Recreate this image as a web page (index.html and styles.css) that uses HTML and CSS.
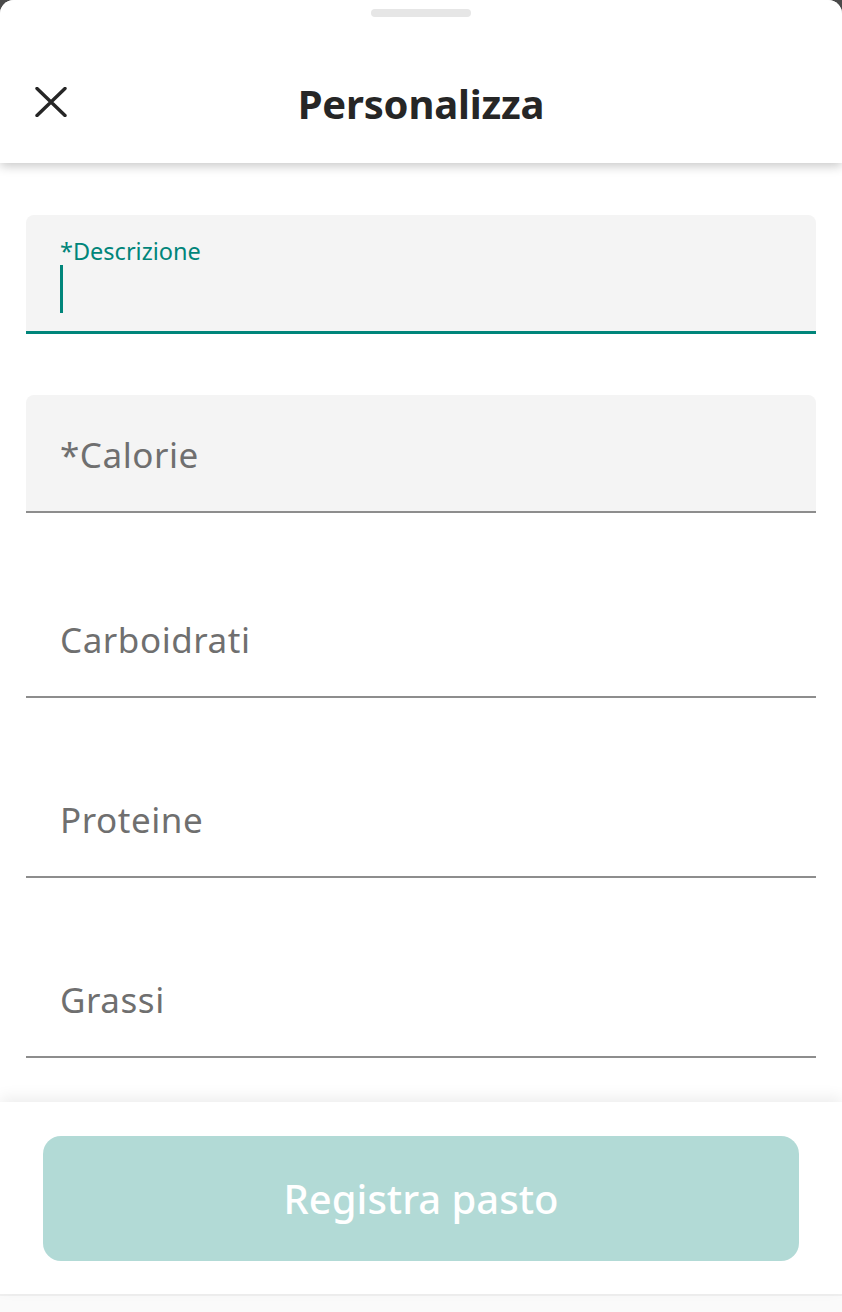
FILE: index.html
```html
<!DOCTYPE html>
<html lang="it">
<head>
<meta charset="utf-8">
<title>Personalizza</title>
<link rel="stylesheet" href="styles.css">
</head>
<body>
<div class="sheet">
  <header class="header">
    <div class="handle"></div>
    <div class="header-row">
      <button class="close" aria-label="Chiudi">
        <svg width="32" height="30" viewBox="0 0 32 30"><path d="M2 1.5 L30 28.5 M30 1.5 L2 28.5" stroke="#262626" stroke-width="3.4" stroke-linecap="round" fill="none"/></svg>
      </button>
      <h1 class="title">Personalizza</h1>
      <span></span>
    </div>
  </header>
  <main class="content">
    <div class="field filled focused">
      <span class="label">*Descrizione</span>
      <span class="cursor"></span>
    </div>
    <div class="field filled gap-a">
      <span class="placeholder">*Calorie</span>
    </div>
    <div class="field gap-b">
      <span class="placeholder">Carboidrati</span>
    </div>
    <div class="field">
      <span class="placeholder">Proteine</span>
    </div>
    <div class="field">
      <span class="placeholder">Grassi</span>
    </div>
  </main>
  <footer class="footer">
    <button class="submit" disabled>Registra pasto</button>
  </footer>
  <div class="navbar"></div>
</div>
</body>
</html>
```
FILE: styles.css
```css
* { box-sizing: border-box; }
html, body { margin: 0; padding: 0; }
body {
  background: #4a4a4a;
  font-family: "Noto Sans", Roboto, "Liberation Sans", sans-serif;
}
.sheet {
  width: 842px;
  height: 1312px;
  background: #ffffff;
  border-radius: 14px 14px 0 0;
  display: flex;
  flex-direction: column;
  overflow: hidden;
}
.header {
  height: 163px;
  flex: 0 0 163px;
  padding-top: 9px;
  display: flex;
  flex-direction: column;
  background: #fff;
  box-shadow: 0 3px 10px rgba(0,0,0,0.22);
  position: relative;
  z-index: 2;
}
.handle {
  width: 100px;
  height: 8px;
  border-radius: 4px;
  background: #e6e6e6;
  margin: 0 auto;
}
.header-row {
  flex: 1;
  display: grid;
  grid-template-columns: 1fr auto 1fr;
  align-items: center;
  padding: 26px 35px 0;
  height: 120px;
}
.close {
  justify-self: start;
  border: 0;
  background: none;
  padding: 0;
  width: 32px;
  height: 30px;
  display: flex;
  margin-top: -3px;
}
.title {
  margin: 0;
  font-size: 40px;
  font-weight: 700;
  color: #262626;
  letter-spacing: -0.2px;
}
.content {
  flex: 1;
  padding: 52px 26px 0;
  display: flex;
  flex-direction: column;
  gap: 62px;
  overflow: hidden;
}
.field {
  height: 118px;
  flex: 0 0 auto;
  border-bottom: 2px solid #8d8d8d;
  padding: 40px 0 0 34px;
  display: flex;
  flex-direction: column;
  align-items: flex-start;
}
.field.filled {
  background: #f4f4f4;
  border-radius: 8px 8px 0 0;
}
.field.focused {
  height: 119px;
  border-bottom: 3px solid #00857a;
  padding-top: 22px;
}
.gap-a { margin-top: -1px; }
.gap-b { margin-top: 5px; }
.label {
  font-size: 23.5px;
  line-height: 28px;
  color: #00857a;
}
.cursor {
  display: block;
  width: 3px;
  height: 48px;
  margin-top: 0;
  background: #00857a;
}
.placeholder {
  font-size: 35px;
  line-height: 40px;
  color: #6f6f6f;
  letter-spacing: 0.55px;
}
.footer {
  flex: 0 0 192px;
  height: 192px;
  padding: 34px 43px 0;
  background: #fff;
  box-shadow: 0 -5px 14px rgba(0,0,0,0.07);
  position: relative;
  z-index: 2;
}
.submit {
  width: 100%;
  height: 125px;
  border: 0;
  border-radius: 18px;
  background: #b2dad6;
  color: #ffffff;
  font-family: "Noto Sans", Roboto, "Liberation Sans", sans-serif;
  font-size: 40px;
  font-weight: 500;
}
.navbar {
  flex: 0 0 18px;
  border-top: 2px solid #f0f0f0;
  background: #fafafa;
}
```
